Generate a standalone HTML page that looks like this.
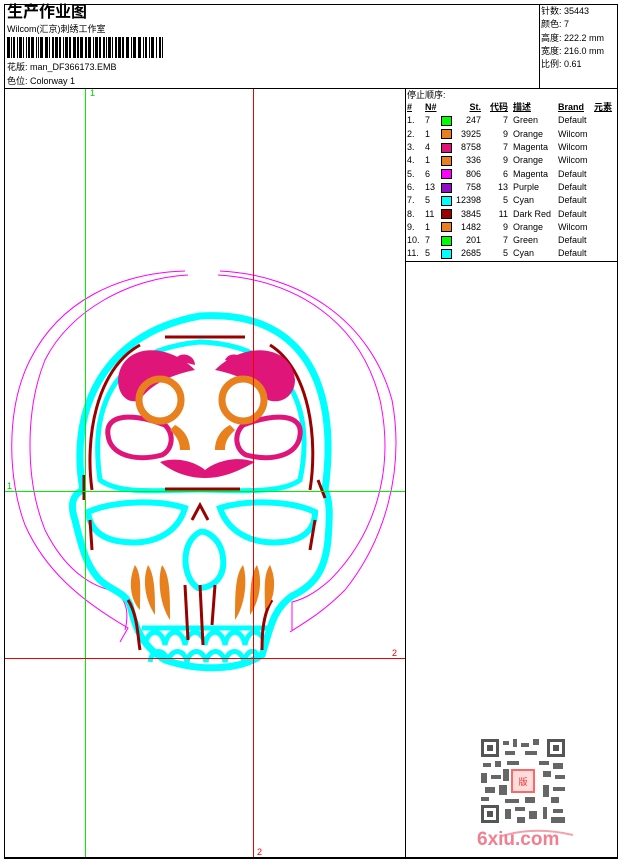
<!DOCTYPE html>
<html><head><meta charset="utf-8">
<style>
*{margin:0;padding:0;box-sizing:border-box}
body{width:620px;height:860px;background:#fff;position:relative;overflow:hidden;font-family:"Liberation Sans","Noto Sans CJK SC",sans-serif;font-size:9px;color:#000}
.a{position:absolute;white-space:nowrap}
.ln{position:absolute;background:#000}
table{border-collapse:collapse;table-layout:fixed}
td{height:13.3px;padding:0;font-size:9px;line-height:13px;white-space:nowrap;overflow:visible}
.sw{display:inline-block;width:11px;height:10px;border:1px solid #000;vertical-align:middle}
</style></head><body>
<div class="ln" style="left:4px;top:4px;width:614px;height:1px"></div>
<div class="ln" style="left:4px;top:857px;width:614px;height:2px"></div>
<div class="ln" style="left:4px;top:4px;width:1px;height:855px"></div>
<div class="ln" style="left:617px;top:4px;width:1px;height:855px"></div>
<div class="ln" style="left:4px;top:88px;width:614px;height:1px"></div>
<div class="ln" style="left:539px;top:4px;width:1px;height:85px"></div>
<div class="ln" style="left:405px;top:88px;width:1px;height:770px"></div>
<div class="ln" style="left:405px;top:261px;width:213px;height:1px"></div>

<div class="a" style="left:7px;top:3px;font-size:16px;font-weight:bold;line-height:20px">生产作业图</div>
<div class="a" style="left:7px;top:23px;line-height:12px">Wilcom(汇京)刺绣工作室</div>
<svg class="a" style="left:7px;top:37px" width="160" height="21">
<g fill="#000">
<rect x="0" y="0" width="3" height="21"/><rect x="4" y="0" width="1" height="21"/><rect x="6" y="0" width="2" height="21"/><rect x="10" y="0" width="1" height="21"/><rect x="12" y="0" width="3" height="21"/><rect x="16" y="0" width="1" height="21"/><rect x="19" y="0" width="1" height="21"/><rect x="21" y="0" width="2" height="21"/><rect x="24" y="0" width="3" height="21"/><rect x="29" y="0" width="1" height="21"/><rect x="31" y="0" width="1" height="21"/><rect x="33" y="0" width="3" height="21"/><rect x="38" y="0" width="3" height="21"/><rect x="42" y="0" width="1" height="21"/><rect x="45" y="0" width="2" height="21"/><rect x="48" y="0" width="3" height="21"/><rect x="52" y="0" width="2" height="21"/><rect x="56" y="0" width="1" height="21"/><rect x="58" y="0" width="3" height="21"/><rect x="62" y="0" width="2" height="21"/><rect x="66" y="0" width="3" height="21"/><rect x="70" y="0" width="2" height="21"/><rect x="73" y="0" width="3" height="21"/><rect x="78" y="0" width="2" height="21"/><rect x="81" y="0" width="3" height="21"/><rect x="86" y="0" width="1" height="21"/><rect x="88" y="0" width="3" height="21"/><rect x="92" y="0" width="2" height="21"/><rect x="96" y="0" width="2" height="21"/><rect x="99" y="0" width="1" height="21"/><rect x="101" y="0" width="3" height="21"/><rect x="105" y="0" width="1" height="21"/><rect x="108" y="0" width="2" height="21"/><rect x="111" y="0" width="3" height="21"/><rect x="115" y="0" width="2" height="21"/><rect x="119" y="0" width="3" height="21"/><rect x="124" y="0" width="1" height="21"/><rect x="126" y="0" width="3" height="21"/><rect x="131" y="0" width="3" height="21"/><rect x="136" y="0" width="1" height="21"/><rect x="138" y="0" width="2" height="21"/><rect x="142" y="0" width="1" height="21"/><rect x="144" y="0" width="3" height="21"/><rect x="149" y="0" width="1" height="21"/><rect x="152" y="0" width="2" height="21"/><rect x="155" y="0" width="1" height="21"/>
</g></svg>
<div class="a" style="left:7px;top:61px;line-height:12px">花版: man_DF366173.EMB</div>
<div class="a" style="left:7px;top:75px;line-height:12px">色位: Colorway 1</div>

<div class="a" style="left:541px;top:5px;line-height:13.3px">针数: 35443<br>颜色: 7<br>高度: 222.2 mm<br>宽度: 216.0 mm<br>比例: 0.61</div>

<div class="a" style="left:407px;top:89px;line-height:12px">停止顺序:</div>
<table class="a" style="left:407px;top:101px;width:210px">
<colgroup><col style="width:18px"><col style="width:16px"><col style="width:14px"><col style="width:26px"><col style="width:27px"><col style="width:50px"><col style="width:36px"><col style="width:23px"></colgroup>
<tr style="font-weight:bold;text-decoration:underline"><td>#</td><td>N#</td><td></td><td align="right">St.</td><td align="right">代码</td><td style="padding-left:5px">描述</td><td>Brand</td><td>元素</td></tr>
<tr><td>1.</td><td>7</td><td><span class="sw" style="background:#0f0"></span></td><td align="right">247</td><td align="right">7</td><td style="padding-left:5px">Green</td><td>Default</td><td></td></tr>
<tr><td>2.</td><td>1</td><td><span class="sw" style="background:#e8801e"></span></td><td align="right">3925</td><td align="right">9</td><td style="padding-left:5px">Orange</td><td>Wilcom</td><td></td></tr>
<tr><td>3.</td><td>4</td><td><span class="sw" style="background:#e0157a"></span></td><td align="right">8758</td><td align="right">7</td><td style="padding-left:5px">Magenta</td><td>Wilcom</td><td></td></tr>
<tr><td>4.</td><td>1</td><td><span class="sw" style="background:#e8801e"></span></td><td align="right">336</td><td align="right">9</td><td style="padding-left:5px">Orange</td><td>Wilcom</td><td></td></tr>
<tr><td>5.</td><td>6</td><td><span class="sw" style="background:#f0f"></span></td><td align="right">806</td><td align="right">6</td><td style="padding-left:5px">Magenta</td><td>Default</td><td></td></tr>
<tr><td>6.</td><td>13</td><td><span class="sw" style="background:#9010c8"></span></td><td align="right">758</td><td align="right">13</td><td style="padding-left:5px">Purple</td><td>Default</td><td></td></tr>
<tr><td>7.</td><td>5</td><td><span class="sw" style="background:#0ff"></span></td><td align="right">12398</td><td align="right">5</td><td style="padding-left:5px">Cyan</td><td>Default</td><td></td></tr>
<tr><td>8.</td><td>11</td><td><span class="sw" style="background:#900"></span></td><td align="right">3845</td><td align="right">11</td><td style="padding-left:5px">Dark Red</td><td>Default</td><td></td></tr>
<tr><td>9.</td><td>1</td><td><span class="sw" style="background:#e8801e"></span></td><td align="right">1482</td><td align="right">9</td><td style="padding-left:5px">Orange</td><td>Wilcom</td><td></td></tr>
<tr><td>10.</td><td>7</td><td><span class="sw" style="background:#0f0"></span></td><td align="right">201</td><td align="right">7</td><td style="padding-left:5px">Green</td><td>Default</td><td></td></tr>
<tr><td>11.</td><td>5</td><td><span class="sw" style="background:#0ff"></span></td><td align="right">2685</td><td align="right">5</td><td style="padding-left:5px">Cyan</td><td>Default</td><td></td></tr>
</table>

<svg class="a" style="left:0;top:0" width="405" height="858">
<g fill="none" stroke="#f0f" stroke-width="1">
<path d="M185 271 C120 273 60 300 30 360 C5 410 8 480 25 525 C45 570 80 600 128 628 L120 642"/>
<path d="M220 271 C300 275 370 320 392 400 C405 470 385 540 345 590 C320 615 300 625 290 632"/>
<path d="M188 275 C130 278 70 310 45 360 C25 410 25 480 45 530 C65 570 90 585 110 590 C125 595 130 610 125 630"/>
<path d="M218 275 C295 280 360 320 380 400 C395 470 375 535 330 580 C312 596 300 600 292 602 L292 630"/>
</g>
<g fill="none" stroke="#0ff">
<path stroke-width="7" d="M83 490 C70 420 95 335 200 316 C300 310 340 380 325 490"/>
<path stroke-width="5" d="M100 480 C90 410 110 350 200 342 C290 345 315 410 300 480 C280 495 230 490 200 490 C160 490 120 495 100 480Z"/>
<path stroke-width="7" d="M83 490 C72 495 70 505 75 520 C80 540 85 565 100 580 C110 590 125 592 130 605 C135 625 140 645 165 660 C200 672 240 670 262 655 C270 630 272 610 292 596 C315 585 325 570 328 540 C330 515 330 500 325 490"/>
<path stroke-width="6" d="M88 512 C115 500 160 500 185 508 C178 532 155 545 125 542 C100 540 90 528 88 512Z"/>
<path stroke-width="6" d="M315 512 C290 500 245 500 220 508 C228 532 252 545 282 542 C305 540 315 528 315 512Z"/>
<path stroke-width="6" d="M200 532 C180 542 182 578 198 588 C212 588 228 578 222 552 C218 537 205 530 200 532Z"/>
<path stroke-width="5" d="M142 628 L268 628"/>
<path stroke-width="5" d="M145 645 C148 628 162 628 165 645 C168 628 182 628 185 645 C188 628 202 628 205 645 C208 628 222 628 225 645 C228 628 242 628 245 645 C248 628 262 628 265 645"/>
<path stroke-width="5" d="M150 662 C152 648 165 648 168 662 C171 648 184 648 187 662 C190 648 203 648 206 662 C209 648 222 648 225 662 C228 648 241 648 244 662 C247 648 258 648 258 660"/>
</g>
<g fill="none" stroke="#900" stroke-width="3">
<path d="M92 490 C85 440 95 370 140 345 M310 490 C318 440 310 370 270 345"/>
<path d="M165 337 L245 337 M165 489 L240 489"/>
<path d="M128 600 C138 615 138 640 140 650 M272 600 C262 615 262 640 262 650"/>
<path d="M192 520 L200 505 L208 520 M185 585 L188 640 M200 585 L203 645 M215 585 L212 625"/>
<path d="M84 475 L84 500 M318 480 L325 498 M90 520 L92 550 M315 520 L310 550"/>
</g>
<g fill="#e0157a">
<path d="M118 380 C120 345 165 340 195 370 C170 375 150 385 140 400 C128 405 118 395 118 380Z"/>
<path d="M295 380 C292 345 245 340 215 370 C240 375 260 385 268 400 C282 405 295 395 295 380Z"/>
<path d="M175 360 C180 350 195 355 195 365 Z M225 360 C230 350 245 355 245 365Z"/>
<path d="M160 462 C180 455 200 465 205 470 C215 462 235 455 255 462 C240 470 225 478 205 478 C185 478 170 470 160 462Z"/>
</g>
<g fill="none" stroke="#e0157a" stroke-width="5">
<path d="M108 435 C105 415 130 412 165 425 C175 435 172 450 162 455 C135 462 110 455 108 435Z"/>
<path d="M300 435 C303 415 278 412 243 425 C233 435 236 450 246 455 C273 462 298 455 300 435Z"/>
</g>
<g fill="none" stroke="#e8801e" stroke-width="7">
<circle cx="160" cy="400" r="21"/>
<circle cx="243" cy="400" r="21"/>
</g>
<g fill="#e8801e">
<path d="M175 425 C185 430 190 440 190 450 L180 450 C180 440 175 435 170 430Z"/>
<path d="M230 425 C220 430 215 440 215 450 L225 450 C225 440 230 435 235 430Z"/>
<path d="M135 565 C128 580 130 600 140 610 C140 590 142 575 135 565Z"/>
<path d="M148 565 C142 580 145 600 155 615 C155 595 155 575 148 565Z"/>
<path d="M162 565 C157 580 160 605 170 620 C170 595 170 575 162 565Z"/>
<path d="M270 565 C277 580 275 600 265 610 C265 590 263 575 270 565Z"/>
<path d="M257 565 C263 580 260 600 250 615 C250 595 250 575 257 565Z"/>
<path d="M243 565 C248 580 245 605 235 620 C235 595 235 575 243 565Z"/>
</g>
<rect x="85" y="89" width="1" height="768" fill="#0e0"/>
<rect x="253" y="89" width="1" height="768" fill="#e00"/>
<rect x="5" y="491" width="400" height="1" fill="#0e0"/>
<rect x="5" y="658" width="400" height="1" fill="#e00"/>
<text x="90" y="96" font-size="9" fill="#0c0" font-family="Liberation Sans">1</text>
<text x="7" y="489" font-size="9" fill="#0c0" font-family="Liberation Sans">1</text>
<text x="392" y="656" font-size="9" fill="#e00" font-family="Liberation Sans">2</text>
<text x="257" y="855" font-size="9" fill="#e00" font-family="Liberation Sans">2</text>
</svg>

<svg class="a" style="left:481px;top:739px" width="84" height="84">
<g fill="#555">
<rect x="0" y="0" width="18" height="18"/><rect x="66" y="0" width="18" height="18"/><rect x="0" y="66" width="18" height="18"/>
</g>
<g fill="#fff"><rect x="3" y="3" width="12" height="12"/><rect x="69" y="3" width="12" height="12"/><rect x="3" y="69" width="12" height="12"/></g>
<g fill="#555"><rect x="6" y="6" width="6" height="6"/><rect x="72" y="6" width="6" height="6"/><rect x="6" y="72" width="6" height="6"/></g>
<g fill="#666">
<rect x="22" y="2" width="6" height="4"/><rect x="32" y="0" width="4" height="8"/><rect x="40" y="4" width="8" height="4"/><rect x="52" y="0" width="6" height="6"/><rect x="24" y="12" width="10" height="4"/><rect x="44" y="12" width="12" height="4"/>
<rect x="2" y="24" width="8" height="4"/><rect x="14" y="22" width="6" height="6"/><rect x="26" y="22" width="12" height="4"/><rect x="58" y="22" width="10" height="4"/><rect x="72" y="24" width="10" height="6"/>
<rect x="0" y="34" width="6" height="10"/><rect x="10" y="36" width="10" height="4"/><rect x="22" y="30" width="6" height="12"/><rect x="62" y="32" width="8" height="6"/><rect x="74" y="36" width="10" height="4"/>
<rect x="4" y="48" width="10" height="6"/><rect x="18" y="46" width="8" height="10"/><rect x="62" y="46" width="6" height="12"/><rect x="72" y="48" width="12" height="4"/>
<rect x="0" y="58" width="8" height="4"/><rect x="24" y="60" width="14" height="4"/><rect x="44" y="58" width="10" height="6"/><rect x="70" y="58" width="8" height="6"/>
<rect x="24" y="70" width="6" height="10"/><rect x="34" y="68" width="10" height="4"/><rect x="48" y="72" width="8" height="8"/><rect x="62" y="68" width="4" height="12"/><rect x="72" y="70" width="10" height="4"/><rect x="70" y="78" width="14" height="6"/><rect x="36" y="78" width="8" height="6"/>
</g>
<rect x="30" y="30" width="24" height="24" fill="#f66"/>
<rect x="32" y="32" width="20" height="20" fill="#fdd"/>
<text x="42" y="46" font-size="9" fill="#e33" text-anchor="middle" font-family="Noto Sans CJK SC,sans-serif">版</text>
</svg>
<svg class="a" style="left:500px;top:828px" width="75" height="10"><path d="M2 8 Q35 -2 73 7" fill="none" stroke="#f4a0aa" stroke-width="2"/></svg>
<div class="a" style="left:477px;top:829px;font-size:19px;font-weight:bold;color:#f08090;line-height:22px;font-family:'Liberation Sans',sans-serif">6xiu.com</div>
</body></html>
